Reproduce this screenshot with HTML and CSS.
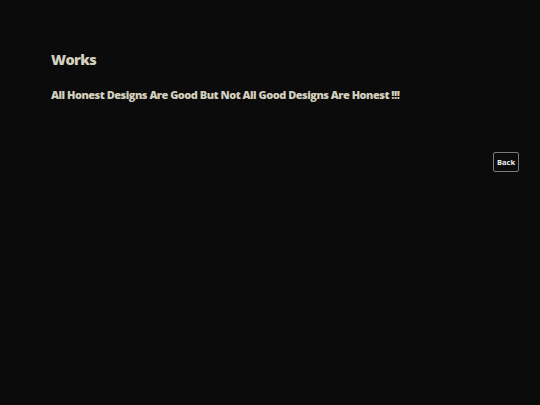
FILE: index.html
```html
<!DOCTYPE html>
<html>
<head>
<meta charset="utf-8">
<link rel="stylesheet" href="styles.css">
</head>
<body>
<main class="page">
  <section class="intro">
    <h1 class="title">Works</h1>
    <p class="tagline">All Honest Designs Are Good But Not All Good Designs Are Honest !!!</p>
  </section>
  <div class="actions">
    <button class="back">Back</button>
  </div>
</main>
</body>
</html>
```

FILE: styles.css
```css
html, body {
  margin: 0;
  padding: 0;
  background: #0b0b0b;
  height: 100%;
}
.page {
  font-family: "Open Sans", "DejaVu Sans", sans-serif;
  padding: 49px 21px 0 51px;
  display: flex;
  flex-direction: column;
}
.title {
  margin: 0;
  font-size: 14.5px;
  font-weight: 800;
  color: #d3cfbd;
  line-height: 22px;
  letter-spacing: -0.6px;
}
.tagline {
  margin: 15px 0 0;
  font-size: 11px;
  font-weight: 800;
  color: #d3cfbd;
  line-height: 18px;
  letter-spacing: -0.5px;
}
.actions {
  display: flex;
  justify-content: flex-end;
  margin-top: 48px;
}
.back {
  font-family: "Open Sans", "DejaVu Sans", sans-serif;
  background: transparent;
  border: 1px solid #7a7a7a;
  border-radius: 2px;
  color: #f0f0f0;
  font-size: 7.5px;
  font-weight: 700;
  width: 26px;
  height: 20px;
  padding: 0;
}
```
